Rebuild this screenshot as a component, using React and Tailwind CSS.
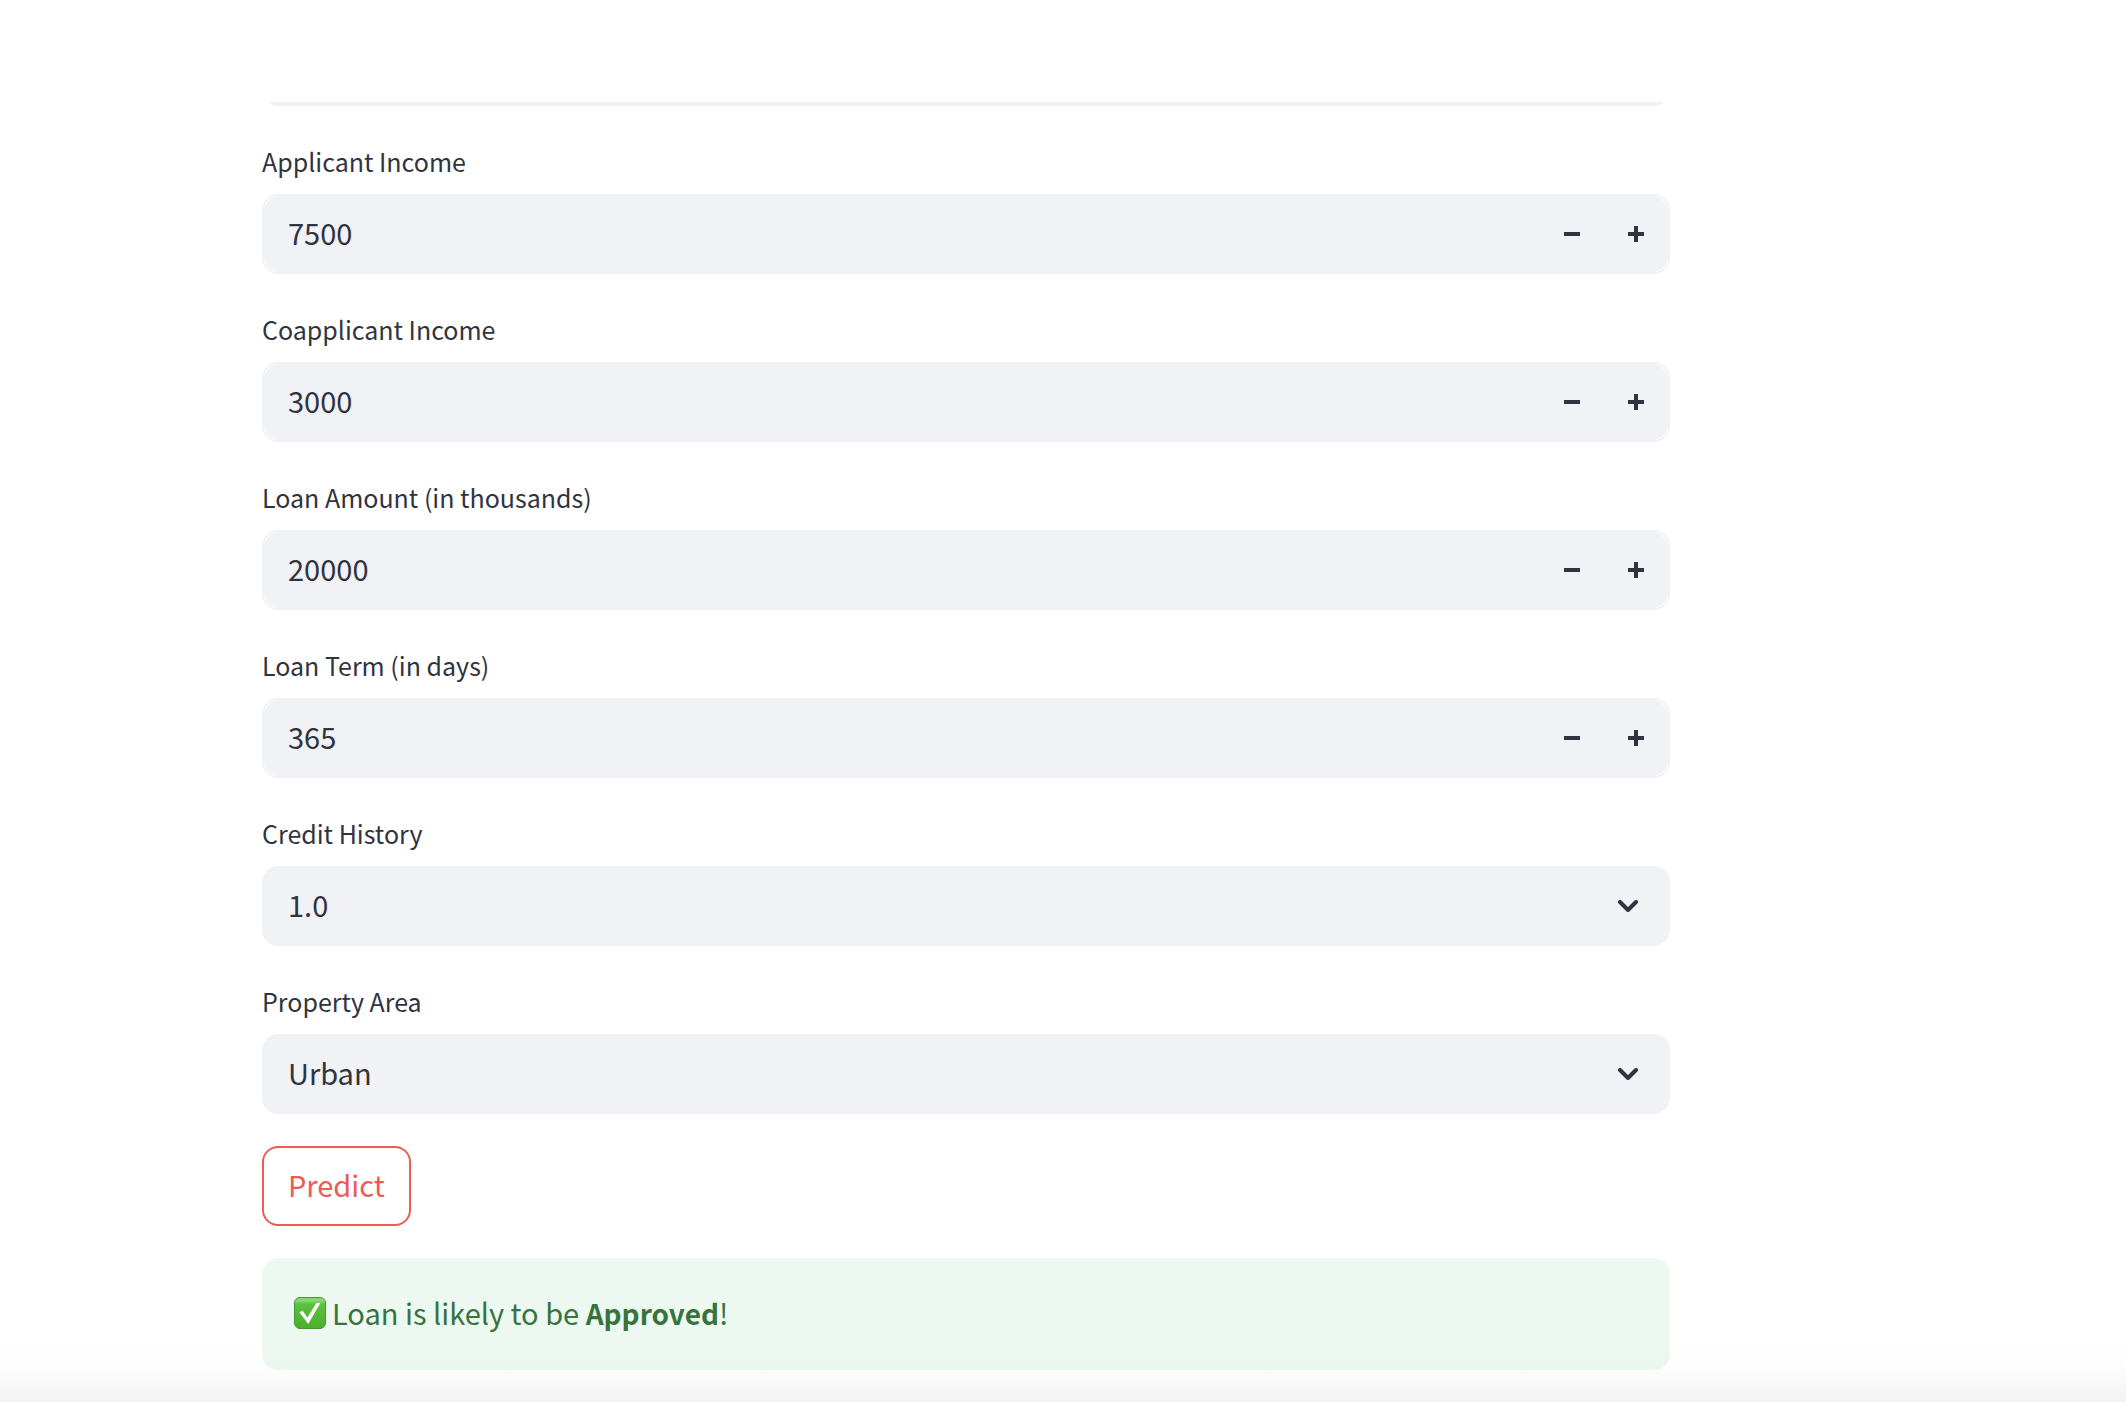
import { useState } from "react";

function NumberField({ id, label, initial }) {
  const [value, setValue] = useState(initial);
  const step = (delta) => setValue((v) => Number(v) + delta);
  return (
    <div className="flex flex-col gap-2">
      <label htmlFor={id} className="h-12 text-[25px] leading-[46px]">
        {label}
      </label>
      <div className="h-20 rounded-2xl border-2 border-[#f0f2f6] bg-white">
        <div className="flex h-full overflow-hidden rounded-2xl bg-[#f0f2f6]">
          <input
            id={id}
            type="text"
            inputMode="numeric"
            value={value}
            onChange={(e) => setValue(e.target.value)}
            className="min-w-0 flex-1 bg-transparent px-6 pb-1 text-[29px] leading-10 outline-none"
          />
          <button
            type="button"
            aria-label={`Decrease ${label}`}
            onClick={() => step(-1)}
            className="flex w-16 items-center justify-center"
          >
            <svg viewBox="0 0 16 16" className="size-4" fill="currentColor" aria-hidden="true">
              <path d="M0 6h16v4H0z" />
            </svg>
          </button>
          <button
            type="button"
            aria-label={`Increase ${label}`}
            onClick={() => step(1)}
            className="flex w-16 items-center justify-center"
          >
            <svg viewBox="0 0 16 16" className="size-4" fill="currentColor" aria-hidden="true">
              <path d="M6 0h4v6h6v4h-6v6H6v-6H0V6h6z" />
            </svg>
          </button>
        </div>
      </div>
    </div>
  );
}

function SelectField({ id, label, options, initial }) {
  const [value, setValue] = useState(initial);
  return (
    <div className="flex flex-col gap-2">
      <label htmlFor={id} className="h-12 text-[25px] leading-[46px]">
        {label}
      </label>
      <div className="relative h-20">
        <select
          id={id}
          value={value}
          onChange={(e) => setValue(e.target.value)}
          className="h-full w-full appearance-none rounded-2xl bg-[#f0f2f6] px-[26px] pb-1 text-[29px] leading-10 outline-none"
        >
          {options.map((o) => (
            <option key={o}>{o}</option>
          ))}
        </select>
        <svg
          viewBox="0 0 20 12"
          className="pointer-events-none absolute top-[34px] right-8 h-3 w-5"
          fill="none"
          stroke="currentColor"
          strokeWidth="4"
          strokeLinecap="round"
          strokeLinejoin="round"
          aria-hidden="true"
        >
          <path d="M2 2l8 8 8-8" />
        </svg>
      </div>
    </div>
  );
}

function CheckMark() {
  return (
    <svg viewBox="0 0 32 32" className="size-8 shrink-0" role="img" aria-label="Approved">
      <defs>
        <linearGradient id="tile" x1="0" y1="0" x2="0" y2="1">
          <stop offset="0" stopColor="#7fd467" />
          <stop offset="0.1" stopColor="#8ad873" />
          <stop offset="0.22" stopColor="#59c23c" />
          <stop offset="1" stopColor="#4fae2f" />
        </linearGradient>
      </defs>
      <rect x="0.5" y="0.5" width="31" height="31" rx="5.5" fill="url(#tile)" stroke="#47983a" strokeWidth="1" />
      <path d="M5.400 15.200L8.600 13.800 13.400 20.600 22.400 6H26.400L14.200 27z" fill="#fff" />
    </svg>
  );
}

export default function App() {
  return (
    <div className="relative min-h-screen bg-white pr-[456px] pb-8 pl-[262px] font-['Noto_Sans_CJK_SC','Noto_Sans',sans-serif] text-[#31333f]">
      <header className="h-[102px]" />
      <main className="flex flex-col gap-8">
        {/* Lower edge of the field scrolled under the header */}
        <div className="flex h-1 items-end overflow-hidden">
          <div className="h-20 w-full shrink-0 rounded-2xl bg-[#f0f2f6]" />
        </div>
        <NumberField id="applicant-income" label="Applicant Income" initial="7500" />
        <NumberField id="coapplicant-income" label="Coapplicant Income" initial="3000" />
        <NumberField id="loan-amount" label="Loan Amount (in thousands)" initial="20000" />
        <NumberField id="loan-term" label="Loan Term (in days)" initial="365" />
        <SelectField id="credit-history" label="Credit History" options={["1.0", "0.0"]} initial="1.0" />
        <SelectField
          id="property-area"
          label="Property Area"
          options={["Urban", "Semiurban", "Rural"]}
          initial="Urban"
        />
        <button
          type="button"
          className="h-20 self-start rounded-2xl border-2 border-[#ee5b54] px-6 pb-1 text-[29px] leading-10 text-[#ee5b54]"
        >
          Predict
        </button>
        <div
          role="status"
          className="flex h-28 items-center gap-1.5 rounded-2xl bg-[#edf9f0] px-8 pb-0.5 text-[29px] leading-[48px] text-[#38733e]"
        >
          <CheckMark />
          <p className="pb-0.5">
            Loan is likely to be <strong className="text-[28px] font-bold">Approved</strong>!
          </p>
        </div>
      </main>
      <div className="pointer-events-none absolute inset-x-0 bottom-0 h-16 bg-linear-to-b from-transparent via-black/1 to-black/5" />
    </div>
  );
}
